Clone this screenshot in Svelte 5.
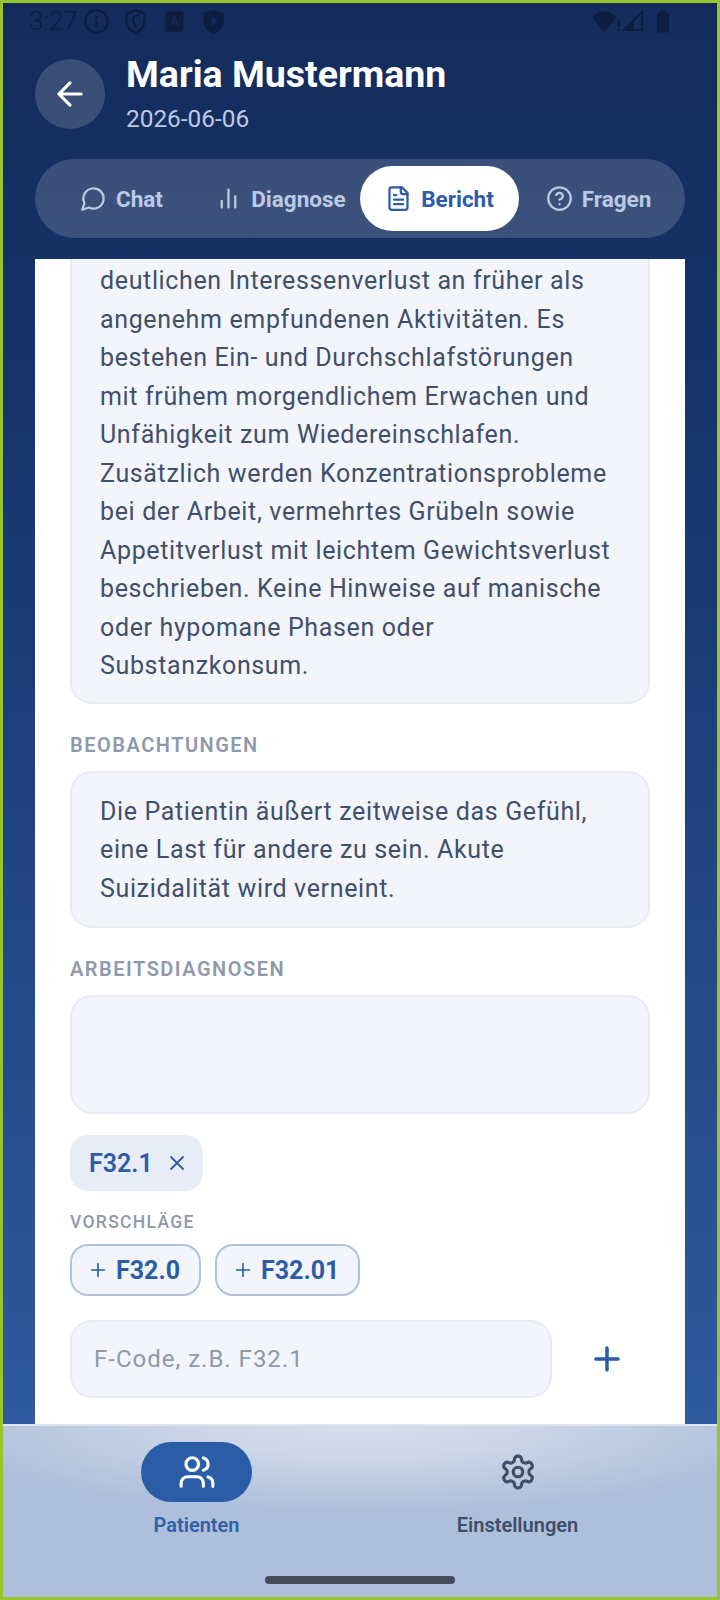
<script>
  const tabs = [
    { id: 'chat', label: 'Chat' },
    { id: 'diagnose', label: 'Diagnose' },
    { id: 'bericht', label: 'Bericht' },
    { id: 'fragen', label: 'Fragen' }
  ];
  const active = 'bericht';
  const suggestions = ['F32.0', 'F32.01'];
</script>

{#snippet tabIcon(id)}
  <svg class="ticon" viewBox="0 0 24 24">
    {#if id === 'chat'}
      <path d="M7.9 20A9 9 0 1 0 4 16.1L2 22Z" />
    {:else if id === 'diagnose'}
      <path d="M18 20V10M12 20V4M6 20v-6" />
    {:else if id === 'bericht'}
      <path d="M15 2H6a2 2 0 0 0-2 2v16a2 2 0 0 0 2 2h12a2 2 0 0 0 2-2V7Z" />
      <path d="M14 2v4a2 2 0 0 0 2 2h4M10 9H8M16 13H8M16 17H8" />
    {:else}
      <circle cx="12" cy="12" r="10" />
      <path d="M9.09 9a3 3 0 0 1 5.83 1c0 2-3 3-3 3M12 17h.01" />
    {/if}
  </svg>
{/snippet}

<div class="screen">
  <div class="status">
    <span class="time">3:27</span>
    <svg class="sicon" viewBox="0 0 24 24"><circle cx="12" cy="12" r="10" fill="none" stroke="currentColor" stroke-width="2" /><path d="M11 11h2v6h-2zM11 7h2v2h-2z" fill="currentColor" /></svg>
    <svg class="sicon" viewBox="0 0 24 24"><path d="M12 2l8 3v6c0 5-3.400 9-8 11-4.600-2-8-6-8-11V5z" fill="none" stroke="currentColor" stroke-width="2" /><path d="M15 6c-4 1-6 3-5 6 .6 2 2 3 2 6" fill="none" stroke="currentColor" stroke-width="1.800" /></svg>
    <svg class="sicon" viewBox="0 0 24 24"><rect x="4" y="3" width="16" height="18" rx="1.500" fill="currentColor" /><path d="M9 15l2.500-8h1.500l2.500 8h-1.500l-.4-1.500h-2.700l-.4 1.500zM11.300 12.300h1.900l-.9-3.300z" fill="#132c5b" /></svg>
    <svg class="sicon" viewBox="0 0 24 24"><path d="M12 1.500l9 3v7c0 5.500-3.800 9.500-9 11.500-5.200-2-9-6-9-11.500v-7z" fill="currentColor" /><path d="M10 8l6 4-6 4z" fill="#132c5b" /></svg>
    <span class="grow"></span>
    <svg class="sicon wifi" viewBox="0 0 28 24"><path d="M0 8C6 1 17 1 23 8L11.500 22z" fill="currentColor" /><path d="M24 11h2v6h-2zM24 19h2v2h-2z" fill="currentColor" /></svg>
    <svg class="sicon signal" viewBox="0 0 24 24"><path d="M2 21L21 2v19z" fill="none" stroke="currentColor" stroke-width="2" /><path d="M2 21l10-10v10z" fill="currentColor" /></svg>
    <svg class="sicon batt" viewBox="0 0 14 24"><path d="M4.500 1h5v2H12a1 1 0 0 1 1 1v18a1 1 0 0 1-1 1H2a1 1 0 0 1-1-1V4a1 1 0 0 1 1-1h2.500z" fill="currentColor" /></svg>
  </div>

  <header class="top">
    <button class="back" aria-label="Zurück">
      <svg viewBox="0 0 24 24"><path d="M12 19l-7-7 7-7M19 12H5" /></svg>
    </button>
    <div class="who">
      <h1>Maria Mustermann</h1>
      <p>2026-06-06</p>
    </div>
  </header>

  <nav class="tabs">
    {#each tabs as t}
      <div class="tab" class:on={t.id === active}>
        {@render tabIcon(t.id)}
        <span>{t.label}</span>
      </div>
    {/each}
  </nav>

  <main class="card">
    <div class="box first">
      deutlichen Interessenverlust an früher als<br />
      angenehm empfundenen Aktivitäten. Es<br />
      bestehen Ein- und Durchschlafstörungen<br />
      mit frühem morgendlichem Erwachen und<br />
      Unfähigkeit zum Wiedereinschlafen.<br />
      Zusätzlich werden Konzentrationsprobleme<br />
      bei der Arbeit, vermehrtes Grübeln sowie<br />
      Appetitverlust mit leichtem Gewichtsverlust<br />
      beschrieben. Keine Hinweise auf manische<br />
      oder hypomane Phasen oder<br />
      Substanzkonsum.
    </div>

    <h2>BEOBACHTUNGEN</h2>
    <div class="box second-box">
      Die Patientin äußert zeitweise das Gefühl,<br />
      eine Last für andere zu sein. Akute<br />
      Suizidalität wird verneint.
    </div>

    <h2 class="second">ARBEITSDIAGNOSEN</h2>
    <div class="box empty"></div>

    <div class="chip">
      <span>F32.1</span>
      <svg viewBox="0 0 24 24"><path d="M18 6L6 18M6 6l12 12" /></svg>
    </div>

    <h3>VORSCHLÄGE</h3>
    <div class="sugs">
      {#each suggestions as s}
        <div class="sug">
          <svg viewBox="0 0 24 24"><path d="M5 12h14M12 5v14" /></svg>
          <span>{s}</span>
        </div>
      {/each}
    </div>

    <div class="add">
      <div class="field">F-Code, z.B. F32.1</div>
      <svg viewBox="0 0 24 24"><path d="M5 12h14M12 5v14" /></svg>
    </div>
  </main>

  <footer class="bottom">
    <div class="navs">
      <div class="nav on">
        <div class="pill">
          <svg viewBox="0 0 24 24">
            <path d="M16 21v-2a4 4 0 0 0-4-4H6a4 4 0 0 0-4 4v2" />
            <circle cx="9" cy="7" r="4" />
            <path d="M22 21v-2a4 4 0 0 0-3-3.870M16 3.130a4 4 0 0 1 0 7.750" />
          </svg>
        </div>
        <span>Patienten</span>
      </div>
      <div class="nav">
        <div class="pill">
          <svg viewBox="0 0 24 24">
            <path d="M12.220 2h-.44a2 2 0 0 0-2 2v.18a2 2 0 0 1-1 1.730l-.43.25a2 2 0 0 1-2 0l-.15-.08a2 2 0 0 0-2.730.73l-.22.38a2 2 0 0 0 .73 2.730l.15.1a2 2 0 0 1 1 1.720v.51a2 2 0 0 1-1 1.740l-.15.09a2 2 0 0 0-.73 2.730l.22.38a2 2 0 0 0 2.730.73l.15-.08a2 2 0 0 1 2 0l.43.25a2 2 0 0 1 1 1.730V20a2 2 0 0 0 2 2h.44a2 2 0 0 0 2-2v-.18a2 2 0 0 1 1-1.730l.43-.25a2 2 0 0 1 2 0l.15.08a2 2 0 0 0 2.730-.73l.22-.39a2 2 0 0 0-.73-2.730l-.15-.08a2 2 0 0 1-1-1.740v-.5a2 2 0 0 1 1-1.740l.15-.09a2 2 0 0 0 .73-2.730l-.22-.38a2 2 0 0 0-2.730-.73l-.15.08a2 2 0 0 1-2 0l-.43-.25a2 2 0 0 1-1-1.730V4a2 2 0 0 0-2-2z" />
            <circle cx="12" cy="12" r="3" />
          </svg>
        </div>
        <span>Einstellungen</span>
      </div>
    </div>
    <div class="home"></div>
  </footer>
</div>

<style>
  :global(body) {
    margin: 0;
  }

  .screen {
    box-sizing: border-box;
    width: 720px;
    height: 1600px;
    border: 3px solid #98c52c;
    display: flex;
    flex-direction: column;
    overflow: hidden;
    font-family: Roboto, "Noto Sans", sans-serif;
    background: linear-gradient(180deg, #132c5b 0%, #17336a 25%, #2f5a9f 90%);
  }

  svg {
    fill: none;
    stroke: currentColor;
    stroke-width: 2;
    stroke-linecap: round;
    stroke-linejoin: round;
    flex: none;
  }

  .status {
    height: 36px;
    display: flex;
    align-items: center;
    padding: 0 47px 0 26px;
    color: #0c1d40;
    flex: none;
  }
  .time {
    font-size: 26px;
    font-weight: 300;
    margin-right: 5px;
  }
  .sicon {
    width: 27px;
    height: 27px;
    margin-right: 12px;
    stroke: none;
  }
  .sicon.wifi {
    width: 30px;
    margin-right: 0;
  }
  .sicon.signal {
    width: 23px;
    margin-right: 0;
  }
  .sicon.batt {
    width: 14px;
    margin-right: 0;
    margin-left: 11px;
  }
  .grow {
    flex: 1;
  }

  .top {
    display: flex;
    align-items: flex-start;
    gap: 21px;
    padding: 20px 32px 0;
    height: 84px;
    flex: none;
  }
  .back {
    width: 70px;
    height: 70px;
    border: 0;
    border-radius: 50%;
    background: rgba(255, 255, 255, 0.16);
    color: #fff;
    padding: 0;
    display: flex;
    align-items: center;
    justify-content: center;
    flex: none;
  }
  .back svg {
    width: 38px;
    height: 38px;
  }
  .who {
    margin-top: -6px;
  }
  .who h1 {
    margin: 0;
    color: #fff;
    font-size: 37.500px;
    line-height: 42px;
    font-weight: 700;
  }
  .who p {
    margin: 10px 0 0;
    color: #bccae3;
    font-size: 24.400px;
    line-height: 28px;
  }

  .tabs {
    margin: 16px 32px 0;
    height: 79px;
    border-radius: 40px;
    background: rgba(255, 255, 255, 0.16);
    display: flex;
    align-items: center;
    padding: 0 7px;
    box-sizing: border-box;
    flex: none;
  }
  .tab {
    flex: 1;
    height: 65px;
    display: flex;
    align-items: center;
    justify-content: center;
    gap: 9px;
    color: #bccae3;
    font-size: 22.500px;
    font-weight: 700;
    border-radius: 33px;
  }
  .tab.on {
    background: #fff;
    color: #2b5ca8;
  }
  .ticon {
    width: 27px;
    height: 27px;
  }

  .card {
    margin: 21px 32px 0;
    height: 1165px;
    flex: none;
    background: #fff;
    padding: 0 35px;
    overflow: hidden;
    box-sizing: border-box;
  }
  .box {
    box-sizing: border-box;
    background: #f3f5fa;
    border: 2px solid #e8ebf2;
    border-radius: 22px;
    padding: 19px 28px;
    color: #3f4f6c;
    font-size: 25px;
    line-height: 38.500px;
    letter-spacing: 0.640px;
    white-space: nowrap;
  }
  .box.first {
    border-top: 0;
    border-radius: 0 0 22px 22px;
    padding-top: 3px;
    padding-bottom: 16px;
  }
  .box.second-box {
    padding-top: 20px;
    padding-bottom: 18px;
  }
  .box.empty {
    height: 119px;
  }
  h2 {
    margin: 28px 0 13px;
    color: #8e99ad;
    font-size: 20px;
    line-height: 26px;
    font-weight: 600;
    letter-spacing: 1.500px;
  }
  h2.second {
    margin-top: 28px;
  }

  .chip {
    margin-top: 21px;
    width: 133px;
    height: 56px;
    box-sizing: border-box;
    background: #e8ecf6;
    border-radius: 18px;
    display: flex;
    align-items: center;
    gap: 12px;
    padding-left: 19px;
    color: #2b5ca8;
    font-size: 25px;
    font-weight: 600;
  }
  .chip svg {
    width: 24px;
    height: 24px;
    stroke-width: 1.800;
  }
  h3 {
    margin: 19px 0 10px;
    color: #8e99ad;
    font-size: 17.500px;
    line-height: 24px;
    font-weight: 500;
    letter-spacing: 1.300px;
  }
  .sugs {
    display: flex;
    gap: 14px;
  }
  .sug {
    height: 52px;
    box-sizing: border-box;
    background: #f3f5fa;
    border: 2px solid #b0c2de;
    border-radius: 18px;
    display: flex;
    align-items: center;
    gap: 7px;
    padding: 0 19px 0 15px;
    color: #2b5ca8;
    font-size: 25px;
    font-weight: 700;
  }
  .sug svg {
    width: 22px;
    height: 22px;
    stroke-width: 1.800;
  }
  .add {
    margin-top: 24px;
    display: flex;
    align-items: center;
    gap: 36px;
    color: #2b5ca8;
  }
  .field {
    width: 482px;
    height: 78px;
    box-sizing: border-box;
    background: #f3f5fa;
    border: 2px solid #e8ebf2;
    border-radius: 22px;
    display: flex;
    align-items: center;
    padding-left: 22px;
    color: #8e99ad;
    font-size: 24px;
    letter-spacing: 1px;
  }
  .add svg {
    width: 38px;
    height: 38px;
    stroke-width: 2.200;
  }

  .bottom {
    flex: 1;
    border-top: 2px solid #dfe5ef;
    background: radial-gradient(ellipse 430px 85px at 50% 0, #d5ddeb 0%, #cdd7e7 35%, #aebfdc 100%);
    background-color: #aebfdc;
    display: flex;
    flex-direction: column;
    align-items: center;
  }
  .navs {
    display: grid;
    grid-template-columns: 321px 321px;
    width: 100%;
    box-sizing: border-box;
    padding: 16px 0 0 33px;
  }
  .nav {
    display: flex;
    flex-direction: column;
    align-items: center;
    color: #3f4d6a;
    font-size: 20px;
    font-weight: 600;
    gap: 11px;
    line-height: 24px;
  }
  .nav .pill {
    width: 111px;
    height: 60px;
    border-radius: 30px;
    display: flex;
    align-items: center;
    justify-content: center;
  }
  .nav svg {
    width: 38px;
    height: 38px;
  }
  .nav.on {
    color: #2f5fa8;
  }
  .nav.on .pill {
    background: #2b5ca8;
    color: #fff;
  }
  .home {
    width: 190px;
    height: 8px;
    border-radius: 4px;
    background: #454b59;
    margin-top: 39px;
  }
</style>
